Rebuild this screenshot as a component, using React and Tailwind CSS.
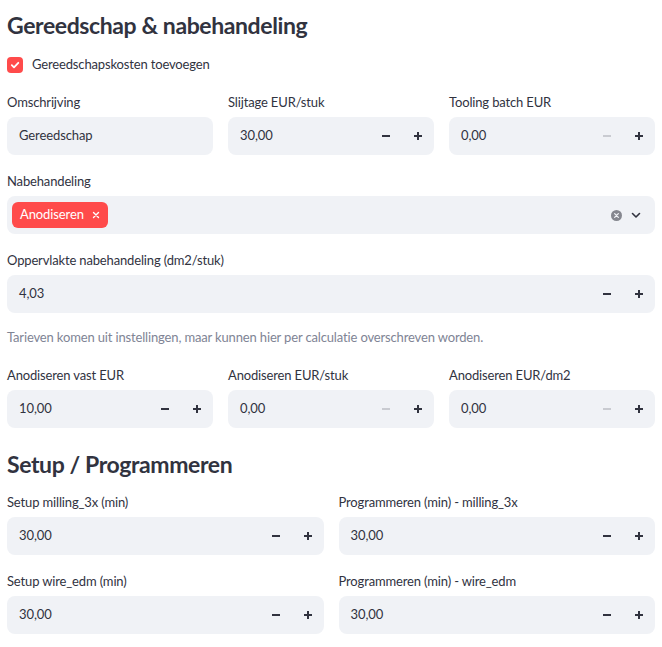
import React from "react";

const font = { fontFamily: "Lato, 'Noto Sans', sans-serif" };

function Minus({ disabled }) {
  return (
    <svg width="10" height="10" viewBox="0 0 10 10">
      <rect x="1" y="4" width="8" height="2" fill={disabled ? "#c9cbd1" : "#31333f"} />
    </svg>
  );
}

function Plus() {
  return (
    <svg width="10" height="10" viewBox="0 0 10 10">
      <rect x="1" y="4" width="8" height="2" fill="#31333f" />
      <rect x="4" y="1" width="2" height="8" fill="#31333f" />
    </svg>
  );
}

function Label({ children }) {
  return (
    <div className="h-[22px] text-[13px] leading-[22px] tracking-[-0.15px] text-[#31333f]">{children}</div>
  );
}

function NumberInput({ label, value, minDisabled }) {
  return (
    <div className="flex flex-col gap-[4px]">
      <Label>{label}</Label>
      <div className="flex h-[38px] items-center rounded-lg bg-[#f0f2f6]">
        <div className="flex-1 pl-[12px] text-[13px] tracking-[-0.1px] text-[#31333f]">{value}</div>
        <div className="flex h-full w-[32px] items-center justify-center">
          <Minus disabled={minDisabled} />
        </div>
        <div className="flex h-full w-[32px] items-center justify-center">
          <Plus />
        </div>
      </div>
    </div>
  );
}

function TextInput({ label, value }) {
  return (
    <div className="flex flex-col gap-[4px]">
      <Label>{label}</Label>
      <div className="flex h-[38px] items-center rounded-lg bg-[#f0f2f6] pl-[12px] text-[13px] tracking-[-0.1px] text-[#31333f]">
        {value}
      </div>
    </div>
  );
}

function MultiSelect({ label }) {
  return (
    <div className="flex flex-col gap-[4px]">
      <Label>{label}</Label>
      <div className="flex h-[38px] items-center rounded-lg bg-[#f0f2f6] pl-[5px] pr-[14px]">
        <div className="flex h-[26px] items-center gap-[8px] rounded-md bg-[#ff4b4b] pl-[8px] pr-[8px] text-[13px] tracking-[-0.1px] text-white">
          <span>Anodiseren</span>
          <svg width="8" height="8" viewBox="0 0 8 8">
            <path d="M1.5 1.5 L6.5 6.5 M6.5 1.5 L1.5 6.5" stroke="#fff" strokeWidth="1.4" strokeLinecap="round" />
          </svg>
        </div>
        <div className="flex-1" />
        <svg width="11" height="11" viewBox="0 0 12 12">
          <circle cx="6" cy="6" r="6" fill="#85878f" />
          <path d="M4 4 L8 8 M8 4 L4 8" stroke="#f0f2f6" strokeWidth="1.4" strokeLinecap="round" />
        </svg>
        <svg className="ml-[9px]" width="10" height="10" viewBox="0 0 10 10">
          <path d="M1.5 3.5 L5 7 L8.5 3.5" stroke="#31333f" strokeWidth="1.6" fill="none" strokeLinecap="round" strokeLinejoin="round" />
        </svg>
      </div>
    </div>
  );
}

export default function App() {
  return (
    <div className="w-[662px] bg-white px-[7px] pt-[9px] pb-[13px]" style={font}>
      <h3 className="h-[32px] text-[23px] font-bold leading-[32px] tracking-[-0.4px] text-[#31333f]">
        Gereedschap &amp; nabehandeling
      </h3>

      <div className="mt-[13px] flex h-[22px] items-center gap-[9px]">
        <div className="flex h-[16px] w-[16px] items-center justify-center rounded-[4px] bg-[#ff4b4b]">
          <svg width="10" height="10" viewBox="0 0 10 10">
            <path d="M1.8 5.2 L4 7.3 L8.3 2.8" stroke="#fff" strokeWidth="1.8" fill="none" strokeLinecap="round" strokeLinejoin="round" />
          </svg>
        </div>
        <span className="text-[13px] tracking-[-0.15px] text-[#31333f]">Gereedschapskosten toevoegen</span>
      </div>

      <div className="mt-[15px] grid grid-cols-3 gap-[15px]">
        <TextInput label="Omschrijving" value="Gereedschap" />
        <NumberInput label="Slijtage EUR/stuk" value="30,00" />
        <NumberInput label="Tooling batch EUR" value="0,00" minDisabled />
      </div>

      <div className="mt-[15px]">
        <MultiSelect label="Nabehandeling" />
      </div>

      <div className="mt-[15px]">
        <NumberInput label="Oppervlakte nabehandeling (dm2/stuk)" value="4,03" />
      </div>

      <p className="mt-[14px] h-[20px] text-[13px] leading-[20px] tracking-[-0.15px] text-[#808495]">
        Tarieven komen uit instellingen, maar kunnen hier per calculatie overschreven worden.
      </p>

      <div className="mt-[17px] grid grid-cols-3 gap-[15px]">
        <NumberInput label="Anodiseren vast EUR" value="10,00" />
        <NumberInput label="Anodiseren EUR/stuk" value="0,00" minDisabled />
        <NumberInput label="Anodiseren EUR/dm2" value="0,00" minDisabled />
      </div>

      <h3 className="mt-[20px] h-[32px] text-[23px] font-bold leading-[32px] tracking-[-0.4px] text-[#31333f]">
        Setup / Programmeren
      </h3>

      <div className="mt-[11px] grid grid-cols-2 gap-x-[15px] gap-y-[15px]">
        <NumberInput label="Setup milling_3x (min)" value="30,00" />
        <NumberInput label="Programmeren (min) - milling_3x" value="30,00" />
        <NumberInput label="Setup wire_edm (min)" value="30,00" />
        <NumberInput label="Programmeren (min) - wire_edm" value="30,00" />
      </div>
    </div>
  );
}
